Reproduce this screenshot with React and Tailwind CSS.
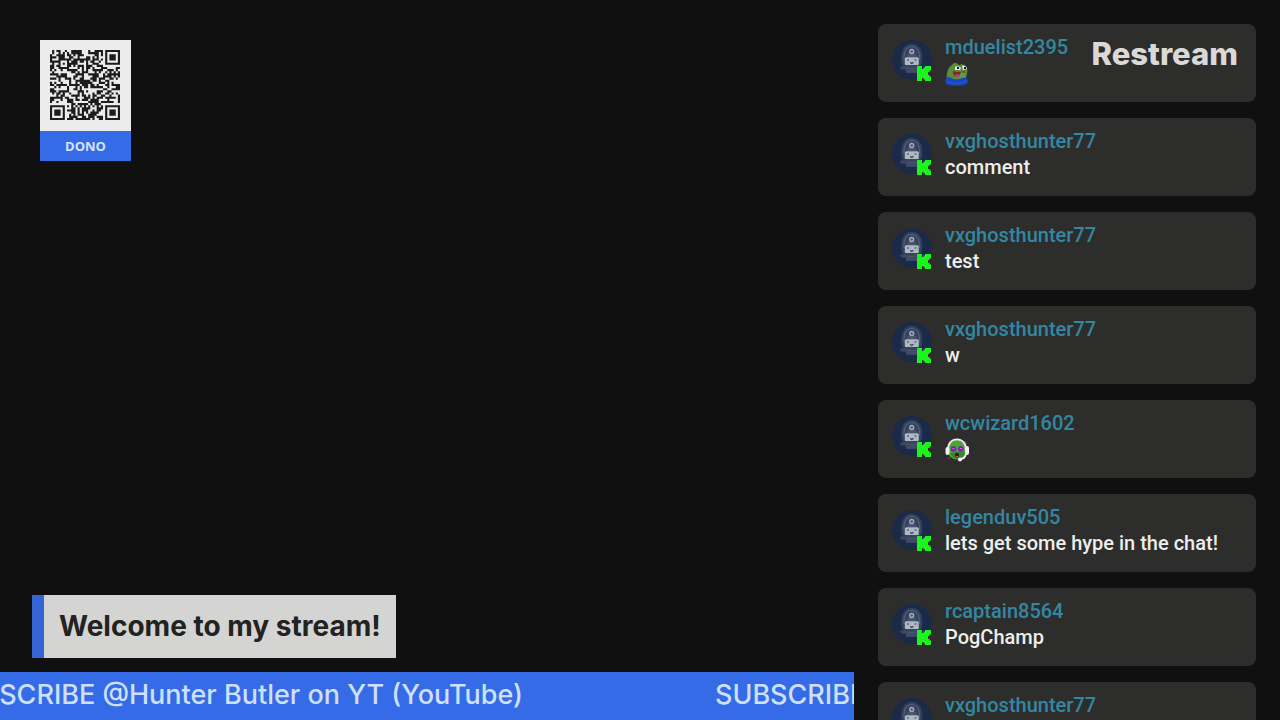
import React from 'react';

const QR_SIZE = 33;

function isFinder(x, y) {
  const ring = Math.max(Math.abs(x - 3), Math.abs(y - 3));
  return ring !== 2 && ring <= 3;
}

function buildQrPath() {
  const last = QR_SIZE - 1;
  let seed = 2395;
  let path = '';
  for (let y = 0; y < QR_SIZE; y += 1) {
    for (let x = 0; x < QR_SIZE; x += 1) {
      seed = (seed * 1103515245 + 12345) % 2147483648;
      let dark = seed / 2147483648 < 0.55;
      const fx = last - x;
      const fy = last - y;
      if (fx < 8 && y < 8) dark = isFinder(fx, y);
      else if (fx < 8 && fy < 8) dark = isFinder(fx, fy);
      else if (x < 8 && fy < 8) dark = isFinder(x, fy);
      else if (Math.abs(x - 6) < 3 && Math.abs(y - 6) < 3) {
        dark = Math.max(Math.abs(x - 6), Math.abs(y - 6)) !== 1;
      } else if (fx === 6 || fy === 6) dark = (x + y) % 2 === 0;
      if (dark) path += `M${x} ${y}h1v1h-1z`;
    }
  }
  return path;
}

const qrPath = buildQrPath();

function DonationCode() {
  return (
    <section aria-label="Donate" className="w-[91px] bg-[#ececec]">
      <div className="pt-[10px] pr-[11px] pb-[11px] pl-[10px]">
        <svg viewBox="0 0 33 33" className="block w-full" role="img" aria-label="Donation QR code">
          <path d={qrPath} fill="#1c1c1c" />
        </svg>
      </div>
      <p className="bg-[#356be6] text-center font-['Open_Sans',sans-serif] text-[13px] leading-[30px] font-bold text-[#d5e4ff]">
        DONO
      </p>
    </section>
  );
}

function Avatar() {
  return (
    <svg viewBox="0 0 40 42" className="h-[42px] w-10 shrink-0" aria-hidden="true">
      <circle cx="20" cy="20" r="20" fill="#1b2a49" />
      <path d="M9.500 23C8 11 12 4 19.700 4S31.500 11 30 23l-3 5H12.500z" fill="#34425d" />
      <path d="M12 20c-.5-8.500 2.500-13.500 7.700-13.500S28 11.500 27.500 20" fill="none" stroke="#536078" strokeWidth="1.200" />
      <path d="M15 17c0-3 1.500-4 4.700-4s4.800 1 4.800 4z" fill="#46546e" />
      <circle cx="19.700" cy="11.500" r="2" fill="#4c5a73" stroke="#a3adba" strokeWidth="1.300" />
      <path d="M8 26.500h9l1 5h-4l-1-2H9z" fill="#3d4a63" />
      <path d="M14 26h12v7H14z" fill="#3a4760" />
      <path d="M15 28.500h9M15 31h9" stroke="#4c5971" strokeWidth="0.800" />
      <rect x="12.800" y="17.300" width="14" height="8" rx="1.500" fill="#b0b8c4" />
      <path d="M15 20h2M22.500 20h2M18.200 22.200l1.600 1.200 1.600-1.200" stroke="#34415a" strokeWidth="1.200" fill="none" />
      <path d="M13.500 25.700h12.500" stroke="#273650" strokeWidth="0.800" />
      <path
        d="M25 26h5v3h1.500v-1.500H33V26h6v4.500h-1.500V32H36v3h1.500v1.500H39V41h-6v-1.500h-1.500V38H30v3h-5z"
        fill="#1cf51c"
      />
    </svg>
  );
}

function FrogEmote() {
  return (
    <svg viewBox="0 0 24 24" className="mt-0.5 size-6" role="img" aria-label="Laughing frog">
      <path d="M2 18C1 11 3 5 7 3c2-3 5-2 7 0 3-2 7 0 8 3 1 3 0 8-2 12z" fill="#598f3b" />
      <path d="M4 14c1 4 6 5 12 3l2 3H3z" fill="#3e702a" />
      <path d="M10 5q3-2 6 1l-1 2h-5zM17 4q4-1 5 3l-4 1z" fill="#e9eee4" />
      <path d="M12 5h2v2h-2zM19 5h2v2h-2z" fill="#161b17" />
      <path d="M8 9q6 2 12 0-1 6-7 6-6-1-5-6z" fill="#8e2235" />
      <path d="M10 13q3-2 6 1l-3 2z" fill="#c8405f" />
      <path d="M16 10l4 1v5l-3 2-3-3z" fill="#62994a" />
      <path d="M0 17q3-3 6-1 6 3 11 0 5-1 6 2l-1 4q-10 4-21 0z" fill="#1746bd" />
      <path d="M2 20q9 3 20-1" stroke="#245ce0" strokeWidth="1" fill="none" />
    </svg>
  );
}

function HeadsetEmote() {
  return (
    <svg viewBox="0 0 24 24" className="mt-0.5 size-6" role="img" aria-label="Headset face">
      <path d="M3 6l2-2M3 20l2 .5M19.500 3.500l2 3" stroke="#b0187d" strokeWidth="1.800" />
      <circle cx="12" cy="12" r="9.500" fill="#3fae2b" />
      <path d="M5 15q3 6 9 6 5-2 6-7z" fill="#3a8030" />
      <path d="M3 12C3 5 7 1.500 12 1.500S21 5 21 12" fill="none" stroke="#f0eaf0" strokeWidth="2" />
      <rect x="0.500" y="9" width="4" height="8" rx="2" fill="#f4eef4" />
      <rect x="20" y="8" width="4" height="9" rx="2" fill="#f4eef4" />
      <circle cx="8.500" cy="11" r="2.900" fill="#8025b4" />
      <circle cx="15.800" cy="11" r="2.900" fill="#8025b4" />
      <path d="M7.500 10.500h2M15 10.500h2" stroke="#df5bd0" strokeWidth="1.200" />
      <ellipse cx="12" cy="17" rx="2" ry="2.600" fill="#33191c" />
      <path d="M11 18h2v1h-2z" fill="#df5164" />
      <path d="M21 16q-1 5-7 5.500" fill="none" stroke="#f4eef4" strokeWidth="1.800" />
      <circle cx="15" cy="21.500" r="2" fill="#f4eef4" />
    </svg>
  );
}

const messages = [
  { name: 'mduelist2395', body: <FrogEmote /> },
  { name: 'vxghosthunter77', body: 'comment' },
  { name: 'vxghosthunter77', body: 'test' },
  { name: 'vxghosthunter77', body: 'w' },
  { name: 'wcwizard1602', body: <HeadsetEmote /> },
  { name: 'legenduv505', body: 'lets get some hype in the chat!' },
  { name: 'rcaptain8564', body: 'PogChamp' },
  { name: 'vxghosthunter77', body: '' },
];

function ChatMessage({ name, body }) {
  return (
    <li className="flex h-[78px] shrink-0 gap-[13px] rounded-lg bg-[#2d2d2c] pt-[10px] pr-4 pl-[14px]">
      <div className="pt-[6px]">
        <Avatar />
      </div>
      <div className="min-w-0 text-xl leading-[26px] font-medium">
        <p className="text-[#3487a3]">{name}</p>
        <div className="text-[#eeeeec]">{body}</div>
      </div>
    </li>
  );
}

const tickerText = 'SUBSCRIBE @Hunter Butler on YT (YouTube)';

export default function App() {
  return (
    <div className="flex h-screen overflow-hidden bg-[#101010] font-[Roboto,sans-serif]">
      <main className="flex min-w-0 flex-1 flex-col justify-between">
        <div className="p-10">
          <DonationCode />
        </div>
        <div>
          <h1 className="mb-[14px] ml-8 w-fit border-l-12 border-[#3564d4] bg-[#d4d4d2] px-[15px] font-[Inter,sans-serif] text-[28px] leading-[63px] font-bold whitespace-nowrap text-[#222221]">
            Welcome to my stream!
          </h1>
          <div className="flex h-12 gap-48 overflow-hidden bg-[#356be6] font-[Inter,sans-serif] text-[27px] leading-[46px] font-medium whitespace-nowrap text-[#cfe0ff]">
            <p className="-ml-14 shrink-0">{tickerText}</p>
            <p className="shrink-0">{tickerText}</p>
          </div>
        </div>
      </main>
      <aside className="relative w-[426px] shrink-0 overflow-hidden px-6 pt-6" aria-label="Chat">
        <ul className="flex flex-col gap-4">
          {messages.map((message, index) => (
            <ChatMessage key={index} {...message} />
          ))}
        </ul>
        <p className="absolute top-9 right-[42px] font-[Inter,sans-serif] text-[31px] leading-9 font-extrabold text-[#d9d9d8]">
          Restream
        </p>
      </aside>
    </div>
  );
}
